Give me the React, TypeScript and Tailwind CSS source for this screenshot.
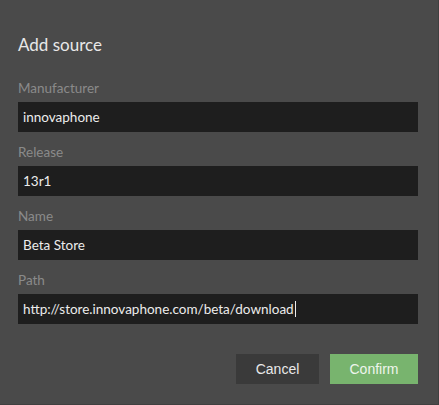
const fields = [
  { label: "Manufacturer", value: "innovaphone" },
  { label: "Release", value: "13r1" },
  { label: "Name", value: "Beta Store" },
  { label: "Path", value: "http://store.innovaphone.com/beta/download", caret: true },
]

function Field({ label, value, caret }: { label: string; value: string; caret?: boolean }) {
  return (
    <div className="flex flex-col">
      <div className="h-5 text-[13.5px] leading-5 text-[#8a8a8a]">{label}</div>
      <div className="mt-1 flex h-[30px] w-[400px] items-center bg-[#1e1e1e] px-[5px] text-[13.5px] text-[#ececec]">
        <span>{value}</span>
        {caret && <span className="ml-px h-[16px] w-px bg-[#ececec]" />}
      </div>
    </div>
  )
}

export default function App() {
  return (
    <div
      className="flex h-[405px] w-[439px] flex-col border-r border-b border-[#404040] bg-[#4a4a4a] pl-[18px] pt-[33px]"
      style={{ fontFamily: 'Lato, "Open Sans", sans-serif' }}
    >
      <h1 className="h-6 text-[17px] leading-6 text-[#e8e8e8]">Add source</h1>

      <div className="mt-[21px] flex flex-col gap-[10px]">
        {fields.map((f) => (
          <Field key={f.label} {...f} />
        ))}
      </div>

      <div
        className="mt-[30px] flex w-[400px] justify-end gap-[11px] text-[14px]"
        style={{ fontFamily: '"Liberation Sans", Arial, sans-serif' }}
      >
        <button className="h-[30px] w-[83px] bg-[#3a3a3a] text-[#e8e8e8]">Cancel</button>
        <button className="h-[30px] w-[88px] bg-[#78b46e] text-[#eef5ec]">Confirm</button>
      </div>
    </div>
  )
}
